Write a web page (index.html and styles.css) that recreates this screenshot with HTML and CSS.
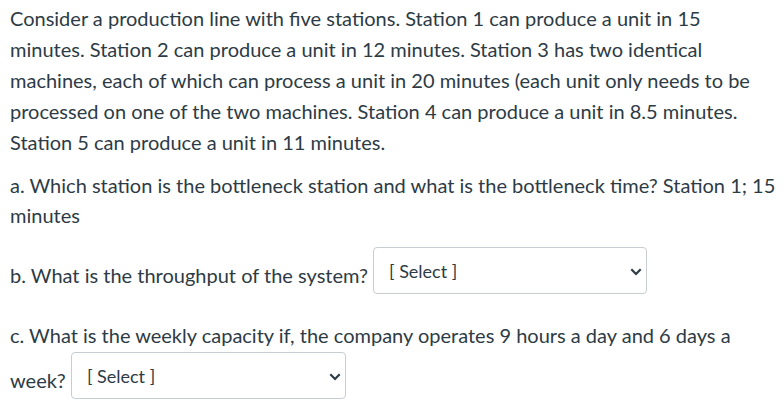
FILE: index.html
```html
<!DOCTYPE html>
<html>
<head>
<meta charset="utf-8">
<link rel="stylesheet" href="styles.css">
</head>
<body>
<div class="question">
  <p class="intro">Consider a production line with five stations. Station 1 can produce a unit in 15 minutes. Station 2 can produce a unit in 12 minutes. Station 3 has two identical machines, each of which can process a unit in 20 minutes (each unit only needs to be processed on one of the two machines. Station 4 can produce a unit in 8.5 minutes. Station 5 can produce a unit in 11 minutes.</p>
  <p class="part">a. Which station is the bottleneck station and what is the bottleneck time? Station 1; 15 minutes</p>
  <p class="part">b. What is the throughput of the system? <span class="select select-b"><span class="select-label">[ Select ]</span><svg class="chev" width="12" height="8" viewBox="0 0 12 8"><path d="M1.3 1.3 L6 6 L10.7 1.3" fill="none" stroke="#2d3b45" stroke-width="2.2"/></svg></span></p>
  <p class="part">c. What is the weekly capacity if, the company operates 9 hours a day and 6 days a week? <span class="select select-c"><span class="select-label">[ Select ]</span><svg class="chev" width="12" height="8" viewBox="0 0 12 8"><path d="M1.3 1.3 L6 6 L10.7 1.3" fill="none" stroke="#2d3b45" stroke-width="2.2"/></svg></span></p>
</div>
</body>
</html>
```
FILE: styles.css
```css
html, body {
  margin: 0;
  padding: 0;
  background: #ffffff;
}
body {
  font-family: Lato, "Open Sans", sans-serif;
  color: #2d3b45;
  font-size: 20px;
  line-height: 31px;
}
.question {
  padding: 3px 6px 0 10px;
}
p {
  margin: 0 0 12px 0;
}
.part {
  line-height: 30px;
}
.select {
  display: inline-flex;
  align-items: center;
  justify-content: space-between;
  box-sizing: border-box;
  height: 47px;
  border: 1px solid #c7cdd1;
  border-radius: 4px;
  padding: 0 4px 0 15px;
  vertical-align: 5px;
  background: #fff;
}
.select-b {
  width: 274px;
  margin: 5px 0 14px 0;
}
.select-c {
  width: 275px;
  margin: 2px 0 0 0;
}
.select-label {
  font-size: 18px;
  line-height: 20px;
}
.chev {
  display: block;
  margin-top: 3px;
}
```
